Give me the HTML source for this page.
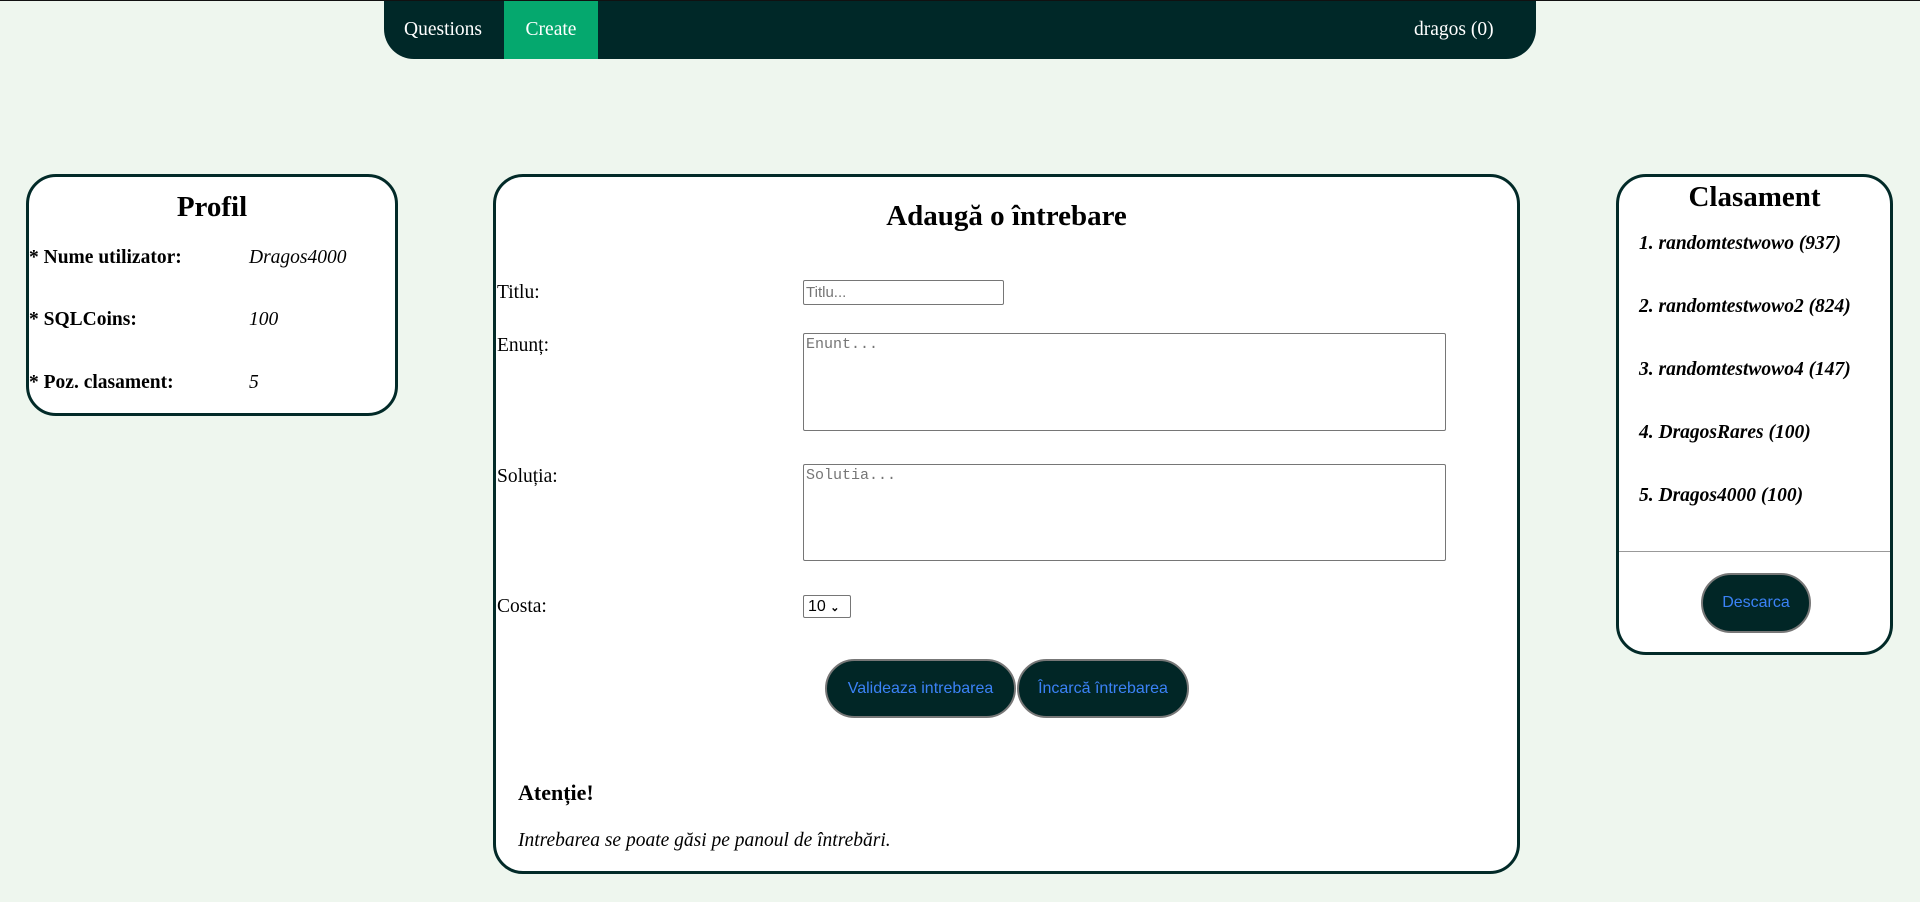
<!DOCTYPE html>
<html><head><meta charset="utf-8">
<style>
*{box-sizing:border-box;margin:0;padding:0}
body{width:1920px;height:902px;background:#eef6ee;font-family:"Liberation Serif",serif;position:relative;overflow:hidden;border-top:1px solid #111}
.a{position:absolute;white-space:nowrap}
.nav{position:absolute;left:384px;top:0;width:1152px;height:58px;background:#002828;border-radius:0 0 30px 30px;overflow:hidden}
.nav .t{position:absolute;top:0;height:58px;line-height:58px;color:#fff;font-size:19.5px}
.card{position:absolute;background:#fff;border:3px solid #022a28;border-radius:30px}
.lbl{font-size:19.5px;font-weight:bold}
.val{font-size:19.5px;font-style:italic}
.inp{position:absolute;border:1px solid #767676;border-radius:2px;background:#fff;color:#757575}
.btn{position:absolute;background:#012626;border:2px solid #777;border-radius:30px;color:#3b82f6;font-family:"Liberation Sans",sans-serif;font-size:16px;display:flex;align-items:center;justify-content:center}
.rk{font-size:19.5px;font-weight:bold;font-style:italic;left:20px}
</style></head><body>
<div class="nav">
 <div class="t" style="left:20px">Questions</div>
 <div class="t" style="left:120px;width:94px;background:#05a86e;text-align:center">Create</div>
 <div class="t" style="left:1030px">dragos (0)</div>
</div>

<div class="card" style="left:26px;top:173px;width:372px;height:242px">
 <div class="a" style="left:0;right:0;top:14px;text-align:center;font-size:29px;font-weight:bold">Profil</div>
 <div class="a lbl" style="left:0;top:70px">* Nume utilizator:</div><div class="a val" style="left:220px;top:70px">Dragos4000</div>
 <div class="a lbl" style="left:0;top:132px">* SQLCoins:</div><div class="a val" style="left:220px;top:132px">100</div>
 <div class="a lbl" style="left:0;top:195px">* Poz. clasament:</div><div class="a val" style="left:220px;top:195px">5</div>
</div>

<div class="card" style="left:493px;top:173px;width:1027px;height:700px">
 <div class="a" style="left:0;right:0;top:23px;text-align:center;font-size:29px;font-weight:bold">Adaugă o întrebare</div>
 <div class="a" style="left:1px;top:105px;font-size:19.5px">Titlu:</div>
 <div class="inp" style="left:307px;top:103px;width:201px;height:25px;font-family:'Liberation Sans',sans-serif;font-size:15px;line-height:23px;padding-left:2px">Titlu...</div>
 <div class="a" style="left:1px;top:158px;font-size:19.5px">Enunț:</div>
 <div class="inp" style="left:307px;top:156px;width:643px;height:98px;font-family:'Liberation Mono',monospace;font-size:15px;padding:2px">Enunt...</div>
 <div class="a" style="left:1px;top:289px;font-size:19.5px">Soluția:</div>
 <div class="inp" style="left:307px;top:287px;width:643px;height:97px;font-family:'Liberation Mono',monospace;font-size:15px;padding:2px">Solutia...</div>
 <div class="a" style="left:1px;top:419px;font-size:19.5px">Costa:</div>
 <div class="inp" style="left:307px;top:418px;width:48px;height:23px;color:#000;font-family:'Liberation Sans',sans-serif;font-size:16px;line-height:21px;padding-left:4px">10 <span style="font-size:11px;font-weight:bold">&#8964;</span></div>
 <div class="btn" style="left:329px;top:482px;width:191px;height:59px">Valideaza intrebarea</div>
 <div class="btn" style="left:521px;top:482px;width:172px;height:59px">Încarcă întrebarea</div>
 <div class="a" style="left:22px;top:603px;font-size:22px;font-weight:bold">Atenție!</div>
 <div class="a" style="left:22px;top:653px;font-size:19.5px;font-style:italic">Intrebarea se poate găsi pe panoul de întrebări.</div>
</div>

<div class="card" style="left:1616px;top:173px;width:277px;height:481px">
 <div class="a" style="left:0;right:0;top:4px;text-align:center;font-size:29px;font-weight:bold">Clasament</div>
 <div class="a rk" style="top:56px">1. randomtestwowo (937)</div>
 <div class="a rk" style="top:119px">2. randomtestwowo2 (824)</div>
 <div class="a rk" style="top:182px">3. randomtestwowo4 (147)</div>
 <div class="a rk" style="top:245px">4. DragosRares (100)</div>
 <div class="a rk" style="top:308px">5. Dragos4000 (100)</div>
 <div class="a" style="left:0;right:0;top:374px;border-top:1px solid #999"></div>
 <div class="btn" style="left:82px;top:396px;width:110px;height:60px">Descarca</div>
</div>
</body></html>
